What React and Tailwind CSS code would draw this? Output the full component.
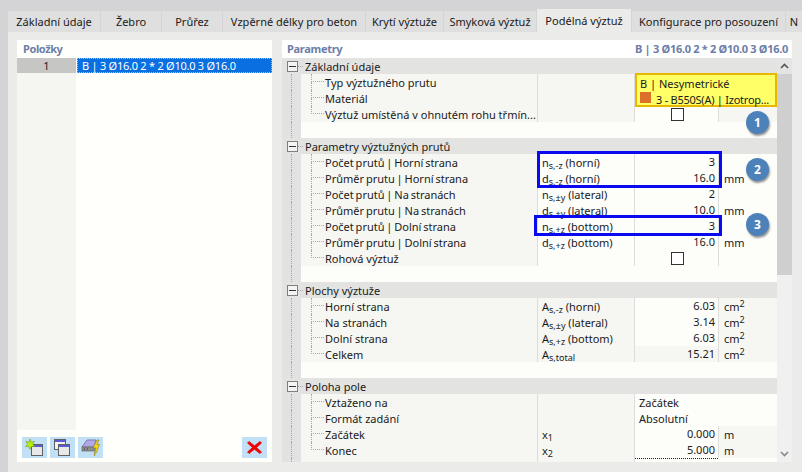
import React from "react"

const tabs = [
  { label: "Základní údaje", w: "w-[92px]" },
  { label: "Žebro", w: "w-[60px]" },
  { label: "Průřez", w: "w-[60px]" },
  { label: "Vzpěrné délky pro beton", w: "w-[142px]" },
  { label: "Krytí výztuže", w: "w-[77px]" },
  { label: "Smyková výztuž", w: "w-[92px]" },
  { label: "Podélná výztuž", w: "w-[94px]", active: true },
  { label: "Konfigurace pro posouzení", w: "w-[153px]" },
  { label: "N", w: "w-[16px]" },
]

const Sym = ({ b, s, t }) => (
  <span>
    {b}
    <sub className="text-[9px]">{s}</sub>
    {t ? ` ${t}` : ""}
  </span>
)

const Cm2 = () => (
  <span>
    cm<sup className="text-[9px]">2</sup>
  </span>
)

const sections = [
  {
    title: "Základní údaje",
    rows: [
      { name: "Typ výztužného prutu" },
      { name: "Materiál" },
      { name: "Výztuž umístěná v ohnutém rohu třmín...", check: true },
    ],
  },
  {
    title: "Parametry výztužných prutů",
    open: true,
    rows: [
      { name: "Počet prutů | Horní strana", sym: <Sym b="n" s="s,-z" t="(horní)" />, val: "3" },
      { name: "Průměr prutu | Horní strana", sym: <Sym b="d" s="s,-z" t="(horní)" />, val: "16.0", unit: "mm" },
      { name: "Počet prutů | Na stranách", sym: <Sym b="n" s="s,±y" t="(lateral)" />, val: "2" },
      { name: "Průměr prutu | Na stranách", sym: <Sym b="d" s="s,±y" t="(lateral)" />, val: "10.0", unit: "mm" },
      { name: "Počet prutů | Dolní strana", sym: <Sym b="n" s="s,+z" t="(bottom)" />, val: "3" },
      { name: "Průměr prutu | Dolní strana", sym: <Sym b="d" s="s,+z" t="(bottom)" />, val: "16.0", unit: "mm" },
      { name: "Rohová výztuž", check: true },
    ],
  },
  {
    title: "Plochy výztuže",
    rows: [
      { name: "Horní strana", sym: <Sym b="A" s="s,-z" t="(horní)" />, val: "6.03", unit: <Cm2 /> },
      { name: "Na stranách", sym: <Sym b="A" s="s,±y" t="(lateral)" />, val: "3.14", unit: <Cm2 /> },
      { name: "Dolní strana", sym: <Sym b="A" s="s,+z" t="(bottom)" />, val: "6.03", unit: <Cm2 /> },
      { name: "Celkem", sym: <Sym b="A" s="s,total" />, val: "15.21", unit: <Cm2 />, computed: true },
    ],
  },
  {
    title: "Poloha pole",
    rows: [
      { name: "Vztaženo na", text: "Začátek" },
      { name: "Formát zadání", text: "Absolutní" },
      { name: "Začátek", sym: <Sym b="x" s="1" />, val: "0.000", unit: "m" },
      { name: "Konec", sym: <Sym b="x" s="2" />, val: "5.000", unit: "m" },
    ],
  },
]

const Gutter = ({ children }) => (
  <div className="w-[19px] h-full flex-shrink-0 bg-[#e2e2e2] pl-[9px]">
    <div className="h-full border-l border-dotted border-[#a8a8a8]">{children}</div>
  </div>
)

const Row = ({ row, last, open }) => {
  const plain = open ? "bg-[#fdfdfa]" : "bg-[#f6f7f2]"
  return (
    <div className="flex h-4 leading-[18px]">
      <Gutter />
      <div className="w-[237px] flex bg-[#f6f7f2] border-r border-[#dcdcdc] pl-[10px] whitespace-nowrap">
        <div className="w-[13px] h-full flex-shrink-0">
          <div className="h-[8px] border-l border-b border-dotted border-[#a8a8a8]" />
          {!last && <div className="h-[8px] border-l border-dotted border-[#a8a8a8]" />}
        </div>
        <span className={`pl-px ${row.name.includes("|") ? "[word-spacing:-1px]" : ""}`}>{row.name}</span>
      </div>
      <div className={`w-[97px] ${plain} border-r border-[#dcdcdc] pl-[4px] whitespace-nowrap`}>{row.sym}</div>
      {row.text ? (
        <div className="w-[142px] bg-[#fdfdfa] pl-[4px]">{row.text}</div>
      ) : (
        <>
          <div
            className={`w-[84px] ${row.computed ? "bg-[#f6f7f2]" : "bg-[#fdfdfa]"} border-r border-[#dcdcdc] flex items-center ${row.check ? "justify-center pl-[2px]" : "justify-end pr-[3px]"}`}
          >
            {row.check ? <span className="block w-[13px] h-[13px] border border-[#333] bg-white" /> : row.val}
          </div>
          <div className={`w-[58px] ${plain} pl-[5px]`}>{row.unit}</div>
        </>
      )}
    </div>
  )
}

const Section = ({ section, isLast }) => (
  <div>
    <div className="flex h-4 leading-[18px] bg-[#e3e4e2]">
      <div className="w-[23px] flex-shrink-0 flex items-center pl-[5px]">
        <span className="w-[11px] h-[11px] border border-[#7f7f7f] bg-[#f4f4f4] flex items-center justify-center">
          <span className="w-[7px] h-px bg-[#333]" />
        </span>
        <span className="w-[5px] border-t border-dotted border-[#a8a8a8]" />
      </div>
      <span>{section.title}</span>
    </div>
    {section.rows.map((row, i) => (
      <Row key={row.name} row={row} open={section.open} last={i === section.rows.length - 1} />
    ))}
    {!isLast && (
      <div className="flex h-4 bg-[#fdfdfa]">
        <Gutter />
      </div>
    )}
  </div>
)

const IconNew = () => (
  <svg width="25" height="21" viewBox="0 0 25 21">
    <rect x="9.500" y="7.500" width="11" height="11" fill="#e8e8e8" stroke="#606060" />
    <rect x="10" y="8" width="10" height="2" fill="#5a5ad8" />
    <path d="M8 2l1.200 3.200 3.300-.8-1.600 2.800 2 2.400-3.200-.1L8 12.200 6.600 9.500l-3.200.1 2-2.400-1.600-2.800 3.300.8z" fill="#b4ee10" stroke="#6b8a10" strokeWidth=".5" />
  </svg>
)

const IconCopy = () => (
  <svg width="25" height="21" viewBox="0 0 25 21">
    <rect x="4.500" y="2.500" width="11" height="10" fill="#f2f2f2" stroke="#606060" />
    <rect x="5" y="3" width="10" height="2" fill="#5a5ad8" />
    <rect x="8.500" y="7.500" width="11" height="11" fill="#e8e8e8" stroke="#606060" />
    <rect x="9" y="8" width="10" height="2" fill="#5a5ad8" />
  </svg>
)

const IconBolt = () => (
  <svg width="25" height="21" viewBox="0 0 25 21">
    <path d="M4 10l5-7h9l-2 7z" fill="#b0a8e8" stroke="#807aa8" />
    <rect x="4" y="10" width="13" height="4" fill="#8e8e8e" stroke="#666" strokeWidth=".7" />
    <rect x="6" y="11.500" width="1" height="1" fill="#333" />
    <rect x="9" y="11.500" width="1" height="1" fill="#333" />
    <path d="M19 3l-4 8h3l-2 7 1 .5 0-3h1.500l3-8H19l2-4.500z" fill="#f2d818" stroke="#8a7a20" strokeWidth=".6" />
  </svg>
)

const IconX = () => (
  <svg width="25" height="21" viewBox="0 0 25 21">
    <path d="M7 4.500l5.500 4.300L18 4.500l1.500 1.500-5 4.500 5 4.500-1.500 1.500-5.500-4.300L7 16.500 5.500 15l5-4.500-5-4.500z" fill="#f00000" stroke="#f00000" strokeWidth=".8" />
  </svg>
)

const Tool = ({ children, className = "" }) => (
  <button className={`w-[25px] h-[21px] bg-[#c2e0f5] flex ${className}`}>{children}</button>
)

const Badge = ({ n, className }) => (
  <div
    className={`absolute left-[464px] w-[23px] h-[23px] rounded-full bg-[#4d81ba] text-white font-bold text-[12px] flex items-center justify-center shadow-[1px_2px_2px_rgba(0,0,0,0.4)] ${className}`}
  >
    {n}
  </div>
)

export default function App() {
  return (
    <div className="w-[802px] h-[472px] overflow-hidden flex flex-col bg-[#d4d4d6] text-[#1a1a1a] text-[11px] font-['Noto_Sans',sans-serif]">
      <div className="flex items-end ml-[8px] mt-[9px] h-[23px] gap-px flex-shrink-0">
        {tabs.map((tab) => (
          <div
            key={tab.label}
            className={`${tab.w} flex-shrink-0 flex items-center justify-center whitespace-nowrap overflow-hidden pt-[2px] ${
              tab.active ? "h-[23px] bg-[#ebebe9]" : "h-[21px] bg-[#dfdfdf]"
            }`}
          >
            {tab.label}
          </div>
        ))}
      </div>

      <div className="flex-1 ml-[8px] bg-[#ebebe9] flex gap-[10px] pl-[9px] pr-[10px] pt-[8px] pb-[10px] min-h-0">
        <div className="w-[255px] bg-[#fffffb] flex flex-col">
          <div className="h-[18px] leading-[18px] pl-[6px] font-bold text-[#6c7ea8] tracking-[-0.4px]">Položky</div>
          <div className="flex-1 flex min-h-0">
            <div className="w-[59px] h-[372px] bg-[#f5f6f2]">
              <div className="h-[15px] leading-[15px] bg-[#c6c6c4] text-center">1</div>
            </div>
            <div className="flex-1 pl-px">
              <div className="h-[15px] leading-[13px] bg-[#0a6fe0] text-white border border-dotted border-[#9cc4f0] pl-[4px] whitespace-nowrap tracking-[-0.25px]">
                B | 3 Ø16.0 2 * 2 Ø10.0 3 Ø16.0
              </div>
            </div>
          </div>
          <div className="flex gap-[3px] px-[5px] pb-[4px]">
            <Tool><IconNew /></Tool>
            <Tool><IconCopy /></Tool>
            <Tool><IconBolt /></Tool>
            <Tool className="ml-auto"><IconX /></Tool>
          </div>
        </div>

        <div className="flex-1 flex flex-col min-w-0">
          <div className="h-[18px] leading-[18px] flex justify-between bg-white pl-[5px] pr-[4px] font-bold text-[#6c7ea8] whitespace-nowrap tracking-[-0.3px]">
            <span>Parametry</span>
            <span>B | 3 Ø16.0 2 * 2 Ø10.0 3 Ø16.0</span>
          </div>
          <div className="flex-1 flex min-h-0">
            <div className="w-[495px] relative overflow-hidden bg-[#fdfdfa]">
              {sections.map((section, i) => (
                <Section key={section.title} section={section} isLast={i === sections.length - 1} />
              ))}
              <div className="flex h-[4px]">
                <Gutter />
                <div className="w-[237px] bg-[#f6f7f2] border-r border-[#dcdcdc]" />
                <div className="w-[97px] bg-[#f6f7f2] border-r border-[#dcdcdc]" />
                <div className="w-[83px] border-t border-dotted border-[#222]" />
              </div>

              <div className="absolute left-[353px] top-[15px] w-[142px] h-[34px] bg-[#ffff66] border-2 border-[#e8b800] px-[3px] pt-px leading-[16px]">
                <div>B | Nesymetrické</div>
                <div className="flex items-start">
                  <span className="w-[11px] h-[11px] bg-[#dd7028] mr-[5px] flex-shrink-0" />
                  <span className="whitespace-nowrap tracking-[-0.25px]">3 - B550S(A) | Izotrop...</span>
                </div>
              </div>

              <div className="absolute left-[255px] top-[93px] w-[185px] h-[37px] border-[3px] border-[#0a0af0]" />
              <div className="absolute left-[252px] top-[157px] w-[188px] h-[21px] border-[3px] border-[#0a0af0]" />

              <Badge n="1" className="top-[53px]" />
              <Badge n="2" className="top-[100px]" />
              <Badge n="3" className="top-[155px]" />
            </div>

            <div className="w-[15px] flex flex-col bg-[#f0f0f0]">
              <div className="h-4 bg-[#e4e4e4] flex items-center justify-center">
                <svg width="9" height="6" viewBox="0 0 9 6">
                  <path d="M1 5l3.500-3.500L8 5" fill="none" stroke="#555" strokeWidth="1.600" />
                </svg>
              </div>
              <div className="h-[201px] bg-[#cfcfcf]" />
              <div className="flex-1 flex items-end justify-center pb-[5px]">
                <svg width="9" height="6" viewBox="0 0 9 6">
                  <path d="M1 1l3.500 3.500L8 1" fill="none" stroke="#888" strokeWidth="1.600" />
                </svg>
              </div>
            </div>
          </div>
        </div>
      </div>
    </div>
  )
}
